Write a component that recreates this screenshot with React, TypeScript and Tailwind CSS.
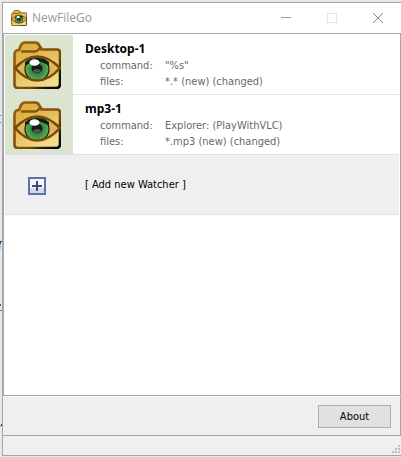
interface Watcher {
  name: string;
  command: string;
  files: string;
}

const watchers: Watcher[] = [
  { name: "Desktop-1", command: '"%s"', files: "*.* (new) (changed)" },
  { name: "mp3-1", command: "Explorer: (PlayWithVLC)", files: "*.mp3 (new) (changed)" },
];

export default function App() {
  return (
    <div className="relative flex h-screen flex-col bg-[#e8e8e8] pt-[2px] pl-[2px] pb-px font-['DejaVu_Sans_Condensed','Noto_Sans',sans-serif] text-[11px] text-black">
      <DesktopEdge />
      <div className="flex min-h-0 flex-1 flex-col border-t border-b border-l border-[#a5a5a5] bg-white">
        <TitleBar />
        <main className="min-h-0 flex-1 overflow-hidden border border-[#a9a9ad] px-px pt-px">
          <ul>
            {watchers.map((watcher) => (
              <WatcherRow key={watcher.name} watcher={watcher} />
            ))}
          </ul>
          <button className="flex h-[60px] w-full items-center border-b border-[#e1e1ec] bg-[#efefef] pt-[2px] text-left">
            <span className="flex w-[80px] pl-[23px]">
              <PlusIcon />
            </span>
            [ Add new Watcher ]
          </button>
        </main>
        <footer>
          <div className="flex h-10 items-center justify-end border-t border-r border-b border-t-white border-r-[#a9a9a9] border-b-[#a0a0a0] bg-[#efefef] pr-[9px]">
            <button className="h-[23px] w-[73px] border border-[#adadad] bg-[#e1e1e1] pt-[2px]">
              About
            </button>
          </div>
          <div className="flex h-[19px] items-end justify-end bg-[#efefef] pr-px pb-[2px]">
            <SizeGrip />
          </div>
        </footer>
      </div>
    </div>
  );
}

function TitleBar() {
  return (
    <header className="flex h-[30px] shrink-0 items-center bg-white pl-2">
      <FolderEye className="size-4" />
      <h1 className="ml-[5px] flex-1 font-['Open_Sans',sans-serif] text-xs text-[#999]">NewFileGo</h1>
      <button aria-label="Minimize" className="flex h-full w-[46px] items-center justify-center">
        <svg width="10" height="10" viewBox="0 0 10 10" stroke="#999" shapeRendering="crispEdges">
          <path d="M0 4.5H10" />
        </svg>
      </button>
      <button aria-label="Maximize" disabled className="flex h-full w-[46px] items-center justify-center">
        <svg width="10" height="10" viewBox="0 0 10 10" fill="none" stroke="#e4e4e4">
          <rect x="0.5" y="0.5" width="9" height="9" />
        </svg>
      </button>
      <button aria-label="Close" className="flex h-full w-[46px] items-center justify-center">
        <svg width="10" height="10" viewBox="0 0 10 10" stroke="#8a8a8a">
          <path d="M0 0L10 10M10 0L0 10" />
        </svg>
      </button>
    </header>
  );
}

function WatcherRow({ watcher }: { watcher: Watcher }) {
  return (
    <li className="flex h-[60px] border-b border-[#e1e1ec]">
      <div className="flex w-[68px] items-center bg-[#dae4cf] pl-2">
        <FolderEye className="size-[48px]" />
      </div>
      <div className="pt-[6px] pl-3">
        <h2 className="font-['Noto_Sans',sans-serif] text-xs leading-4 font-bold">{watcher.name}</h2>
        <dl className="grid grid-cols-[65px_auto] pt-px pl-[15px] leading-4 text-[#6b6864]">
          <dt>command:</dt>
          <dd>{watcher.command}</dd>
          <dt>files:</dt>
          <dd>{watcher.files}</dd>
        </dl>
      </div>
    </li>
  );
}

// Sliver of whatever shows on the desktop behind the window
function DesktopEdge() {
  return (
    <svg
      className="absolute top-0 left-0"
      width="2"
      height="457"
      viewBox="0 0 2 457"
      shapeRendering="crispEdges"
      aria-hidden="true"
    >
      <path d="M0 115h1v1H0zM0 122h1v1H0z" fill="#2d7fc4" />
      <path d="M0 241h2v1H0z" fill="#3a3a42" />
      <path d="M0 242h1v2H0z" fill="#2459b8" />
      <path d="M0 244h1v5H0z" fill="#8ccaf5" />
      <path d="M0 304h1v2H0z" fill="#1d6fae" />
      <path d="M0 310h2v1H0z" fill="#7d7350" />
      <path d="M0 425h1v2H0z" fill="#e0a850" />
      <path d="M1 424h1v2H1z" fill="#3a3a42" />
    </svg>
  );
}

function FolderEye({ className }: { className: string }) {
  return (
    <svg className={className} viewBox="0 0 48 48" fill="none" aria-hidden="true">
      <defs>
        <linearGradient id="folder" x1="0" y1="0" x2="0.6" y2="1">
          <stop offset="0" stopColor="#dba83c" />
          <stop offset="0.5" stopColor="#e2bd55" />
          <stop offset="1" stopColor="#f3dc8c" />
        </linearGradient>
        <linearGradient id="edge" x1="0" y1="0" x2="1" y2="1">
          <stop offset="0" stopColor="#98600f" />
          <stop offset="0.65" stopColor="#7b4a08" />
          <stop offset="0.85" stopColor="#1c1204" />
          <stop offset="1" stopColor="#000" />
        </linearGradient>
        <radialGradient id="iris" cx="0.5" cy="0.5" r="0.5">
          <stop offset="0" stopColor="#2c6a38" />
          <stop offset="0.6" stopColor="#3f9048" />
          <stop offset="1" stopColor="#5cb45a" />
        </radialGradient>
        <clipPath id="lid">
          <path d="M2 27Q13 15.500 24 15.500T47 27Q36 40 24 40T2 27Z" />
        </clipPath>
      </defs>
      <path
        d="M1.5 13Q2 9 6 9L8 4Q9.500 1.500 12 1.500H22Q25 1.500 26 4L28.500 8.500H44Q47 8.500 47 11.500V43Q47 47 43 47H5Q1.500 47 1.500 44Z"
        fill="url(#folder)"
        stroke="url(#edge)"
        strokeWidth="2.6"
        strokeLinejoin="round"
      />
      <path d="M9 10.500H22Q24 10.500 25.500 8.500L28 6.500" stroke="#8a560c" strokeWidth="2.400" strokeLinecap="round" />
      <g clipPath="url(#lid)">
        <path d="M2 27Q13 15 24 15T47 27Q36 40 24 40T2 27Z" fill="#dfb75a" />
        <circle cx="24" cy="28" r="12" fill="url(#iris)" stroke="#10240f" strokeWidth="1.2" />
        <path d="M12 21Q24 13 36 21V25Q24 16 12 25Z" fill="#102012" />
        <ellipse cx="24" cy="27.5" rx="5.5" ry="5" fill="#161c16" />
        <path d="M19.500 30Q24 26 28.500 30Q24 34 19.500 30Z" fill="#4d5a4d" />
        <ellipse cx="21.5" cy="21.5" rx="5" ry="3.300" fill="#fff" />
      </g>
      <path
        d="M2 27C9 20 16 15.500 24 15.500S40 20 47 27C40 35 32 39.500 24 39.500S9 35 2 27Z"
        stroke="#754a08"
        strokeWidth="2.6"
        strokeLinejoin="round"
      />
    </svg>
  );
}

function PlusIcon() {
  return (
    <svg width="18" height="18" viewBox="0 0 18 18" fill="none" shapeRendering="crispEdges" aria-hidden="true">
      <rect x="1" y="1" width="16" height="16" fill="#f7f7f9" />
      <path d="M2 11H16V16H2Z" fill="#d6d9e2" />
      <rect x="1" y="1" width="16" height="16" stroke="#5c72ab" strokeWidth="2" />
      <path d="M4 9H14M9 4V14" stroke="#394b78" strokeWidth="2" />
    </svg>
  );
}

function SizeGrip() {
  return (
    <svg width="8" height="8" viewBox="0 0 8 8" fill="#bfbfb4" shapeRendering="crispEdges" aria-hidden="true">
      <path d="M6 0h2v2H6zM3 3h2v2H3zM6 3h2v2H6zM0 6h2v2H0zM3 6h2v2H3zM6 6h2v2H6z" />
    </svg>
  );
}
